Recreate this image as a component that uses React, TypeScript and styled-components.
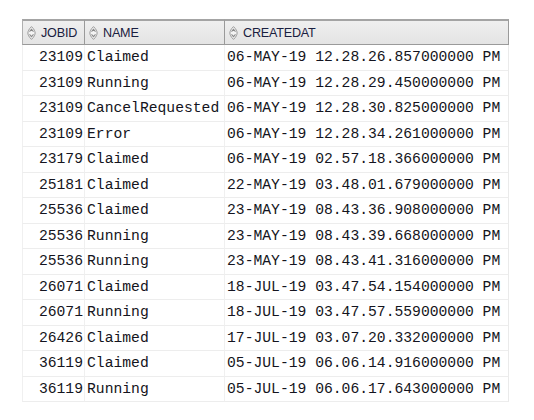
import React from "react";
import styled, { createGlobalStyle } from "styled-components";

const Global = createGlobalStyle`
  html, body { margin: 0; padding: 0; background: #ffffff; }
  body { width: 534px; height: 420px; overflow: hidden; }
`;

const Page = styled.div`
  padding: 19px 0 0 22px;
`;

const Table = styled.div`
  display: grid;
  grid-template-columns: 63px 140px 284px;
  width: 487px;
`;

const HeadCell = styled.div<{ $first?: boolean }>`
  height: 26px;
  box-sizing: border-box;
  display: flex;
  align-items: center;
  gap: 5px;
  padding-left: 4px;
  background: linear-gradient(#efefef, #e4e4e4);
  border-top: 2px solid #a4a4a4;
  border-bottom: 1px solid #9a9a9a;
  border-right: 1px solid #9a9a9a;
  border-left: ${(p) => (p.$first ? "1px solid #b0b0b0" : "none")};
  font-family: "Liberation Sans", Arial, sans-serif;
  font-size: 12.6px;
  letter-spacing: -0.2px;
  color: #1a2040;
`;

const Cell = styled.div<{ $right?: boolean; $first?: boolean; $last?: boolean }>`
  height: 25.5px;
  box-sizing: border-box;
  display: flex;
  align-items: center;
  justify-content: ${(p) => (p.$right ? "flex-end" : "flex-start")};
  padding: ${(p) => (p.$right ? "0 1px 0 0" : "0 0 0 2px")};
  border-bottom: 1px solid #ededed;
  border-right: 1px solid ${(p) => (p.$last ? "#eaeaea" : "#f0f0f0")};
  border-left: ${(p) => (p.$first ? "1px solid #f0f0f0" : "none")};
  font-family: "Liberation Mono", "Courier New", monospace;
  font-size: 14.7px;
  color: #141420;
  white-space: pre;
`;

const SortIcon = () => (
  <svg width="9" height="14" viewBox="0 0 9 14">
    <path
      d="M4.5 0.6 C1.6 3.4 0.9 5.4 0.9 7 C0.9 8.6 1.6 10.6 4.5 13.4 C7.4 10.6 8.1 8.6 8.1 7 C8.1 5.4 7.4 3.4 4.5 0.6 Z"
      fill="#f4f4f4"
      stroke="#9a9a9a"
      strokeWidth="1"
    />
    <path d="M2.5 5.6 L4.5 3.4 L6.5 5.6" fill="none" stroke="#8a8a8a" strokeWidth="1.1" />
    <path d="M2.5 8.4 L4.5 10.6 L6.5 8.4" fill="none" stroke="#8a8a8a" strokeWidth="1.1" />
  </svg>
);

const rows: [string, string, string][] = [
  ["23109", "Claimed", "06-MAY-19 12.28.26.857000000 PM"],
  ["23109", "Running", "06-MAY-19 12.28.29.450000000 PM"],
  ["23109", "CancelRequested", "06-MAY-19 12.28.30.825000000 PM"],
  ["23109", "Error", "06-MAY-19 12.28.34.261000000 PM"],
  ["23179", "Claimed", "06-MAY-19 02.57.18.366000000 PM"],
  ["25181", "Claimed", "22-MAY-19 03.48.01.679000000 PM"],
  ["25536", "Claimed", "23-MAY-19 08.43.36.908000000 PM"],
  ["25536", "Running", "23-MAY-19 08.43.39.668000000 PM"],
  ["25536", "Running", "23-MAY-19 08.43.41.316000000 PM"],
  ["26071", "Claimed", "18-JUL-19 03.47.54.154000000 PM"],
  ["26071", "Running", "18-JUL-19 03.47.57.559000000 PM"],
  ["26426", "Claimed", "17-JUL-19 03.07.20.332000000 PM"],
  ["36119", "Claimed", "05-JUL-19 06.06.14.916000000 PM"],
  ["36119", "Running", "05-JUL-19 06.06.17.643000000 PM"],
];

export default function App() {
  return (
    <>
      <Global />
      <Page>
        <Table>
          <HeadCell $first>
            <SortIcon />
            JOBID
          </HeadCell>
          <HeadCell>
            <SortIcon />
            NAME
          </HeadCell>
          <HeadCell>
            <SortIcon />
            CREATEDAT
          </HeadCell>
          {rows.map((r, i) => (
            <React.Fragment key={i}>
              <Cell $right $first>{r[0]}</Cell>
              <Cell>{r[1]}</Cell>
              <Cell $last>{r[2]}</Cell>
            </React.Fragment>
          ))}
        </Table>
      </Page>
    </>
  );
}
